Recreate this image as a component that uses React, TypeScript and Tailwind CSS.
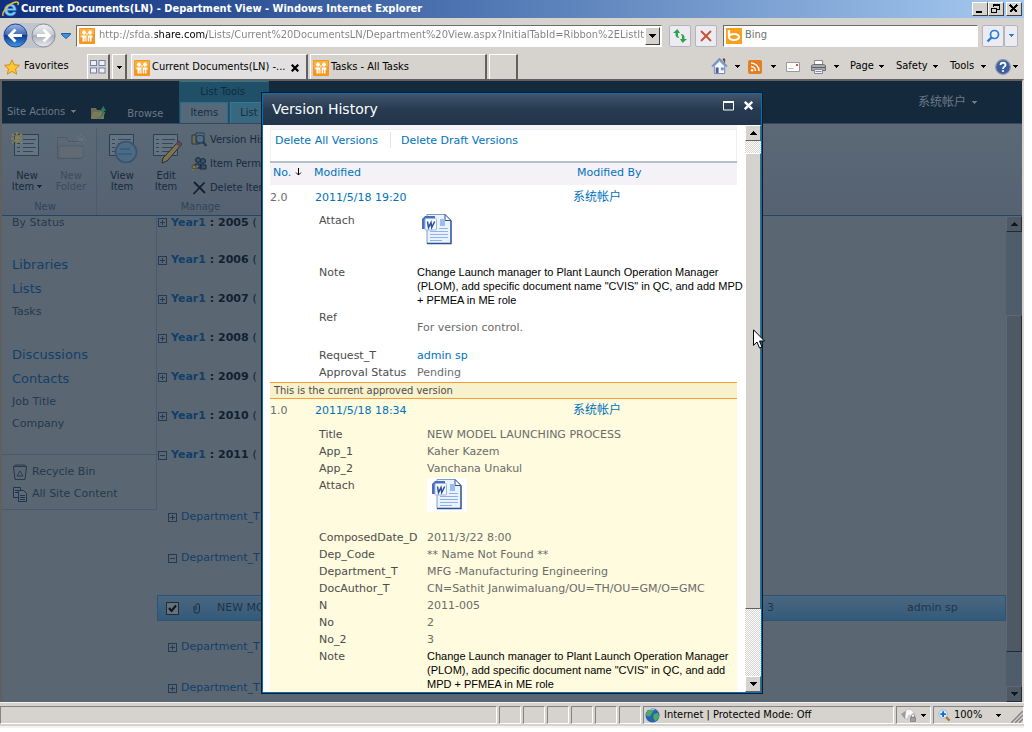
import type { ReactNode } from 'react'

const verdana = "font-['DejaVu_Sans','Noto_Sans_CJK_SC',sans-serif]"
const tahoma = "font-['DejaVu_Sans_Condensed','DejaVu_Sans','Noto_Sans_CJK_SC',sans-serif]"

function Caret({ className = '' }: { className?: string }) {
  return (
    <svg viewBox="0 0 5 3" className={`h-[3px] w-[5px] shrink-0 ${className}`} shapeRendering="crispEdges" fill="currentColor" aria-hidden="true">
      <path d="M0 0h5v1h-5zM1 1h3v1h-3zM2 2h1v1h-1z" />
    </svg>
  )
}

function IeLogo() {
  return (
    <svg viewBox="0 0 18 16" className="h-4 w-[18px] shrink-0" aria-hidden="true">
      <path d="M14.2 9.6H5.6c.2 1.700 1.500 2.600 3 2.600 1.200 0 2-.5 2.500-1.300h3c-.8 2.500-2.900 3.900-5.600 3.900-3.600 0-6.100-2.400-6.100-5.900s2.600-6 6-6c3.600 0 6 2.700 5.800 6.700zM5.700 7.500h5.300C10.800 6 9.800 5.200 8.400 5.200S6 6 5.700 7.500z" fill="#7cc8f8" stroke="#2a78d8" strokeWidth=".6" />
      <path d="M1.200 14.800C-.6 12 6 2.400 14 1c2.200-.3 3 .8 1.800 3" fill="none" stroke="#f8b830" strokeWidth="1.500" />
    </svg>
  )
}

function SiteIcon() {
  return (
    <svg viewBox="0 0 16 16" className="h-4 w-4 shrink-0" aria-hidden="true">
      <rect width="16" height="16" rx="1" fill="#f8951d" />
      <path d="M1 1h14v5c-5 3-9 1-14 4z" fill="#fbb040" />
      <g fill="#fff">
        <path d="M4 2.500h2v1h1v2H6v1H4v-1H3v-2h1zM10 2.500h2v1h1v2h-1v1h-2v-1H9v-2h1z" />
        <path d="M2.500 7.500h5v6H6.300v-4h-.7v4H3.500v-4h-1zM8.700 7.500h4.800v2h-1v4h-1.500v-4h-.7v4H8.700z" />
        <path d="M7.500 5h1v2h-1z" />
      </g>
    </svg>
  )
}

function WordIcon() {
  return (
    <svg viewBox="0 0 32 32" className="h-8 w-8 shrink-0" aria-hidden="true">
      <path d="M6 1.500h18l6 6v23H6z" fill="#eaf2fd" stroke="#7f9ccc" />
      <path d="M30 8v22.500H6" fill="none" stroke="#2b4f8f" strokeWidth="1.300" />
      <path d="M24 1.500v6h6z" fill="#fff" stroke="#2b4f8f" />
      <rect x="19" y="6" width="5" height="7" fill="#9bbcf0" />
      <path d="M18 15.500h9M9 18.500h18M9 21.500h18M9 24.500h18M9 27.500h12" stroke="#8fb0e8" strokeWidth="1" />
      <path d="M1 6l3-3h10v3L4 7v9H1z" fill="#4a6fb8" />
      <rect x="4" y="5.500" width="11.500" height="11.500" rx="1" fill="#f4f8ff" stroke="#9db6e2" />
      <path d="M6.500 8.500l1 6 2.500-5 .7 5 3-6" fill="none" stroke="#2d4f98" strokeWidth="1.500" />
    </svg>
  )
}

function NavArrow({ back = false }: { back?: boolean }) {
  return (
    <button type="button" aria-label={back ? 'Back' : 'Forward'} className="h-[25px] w-[25px] shrink-0">
      <svg viewBox="0 0 25 25" className="h-[25px] w-[25px]">
        <defs>
          <linearGradient id={back ? 'bk' : 'fw'} x1="0" y1="0" x2="0" y2="1">
            <stop offset="0" stopColor={back ? '#9fb7e4' : '#f0f1f4'} />
            <stop offset=".48" stopColor={back ? '#3c68b4' : '#c4c8d0'} />
            <stop offset=".5" stopColor={back ? '#0b3a94' : '#a8adb8'} />
            <stop offset="1" stopColor={back ? '#3f9be8' : '#eceef2'} />
          </linearGradient>
        </defs>
        <circle cx="12.500" cy="12.500" r="11.500" fill={back ? 'url(#bk)' : 'url(#fw)'} stroke={back ? '#27478a' : '#8a909c'} />
        <path d={back ? 'M12.500 6.500l-6 6 6 6M7 12.500h12' : 'M12.500 6.500l6 6-6 6M18 12.500H6'} fill="none" stroke="#fff" strokeWidth="2.800" />
      </svg>
    </button>
  )
}

function CaptionButton({ label, children }: { label: string; children: ReactNode }) {
  return (
    <button type="button" aria-label={label} className="h-[14px] w-4 border border-t-white border-r-[#404040] border-b-[#404040] border-l-white bg-[#d6d3ce]">
      <svg viewBox="0 0 14 12" className="h-3 w-[14px]" fill="none" stroke="#000" shapeRendering="crispEdges">
        {children}
      </svg>
    </button>
  )
}

function TitleBar() {
  return (
    <header className="flex h-[18px] shrink-0 items-center gap-[1px] bg-gradient-to-r from-[#0f2f7c] to-[#a6caf0] px-[2px]">
      <IeLogo />
      <h1 className={`flex-1 truncate pt-[1px] text-[11px] font-bold text-white ${tahoma}`}>
        Current Documents(LN) - Department View - Windows Internet Explorer
      </h1>
      <div className="flex">
        <CaptionButton label="Minimize"><path d="M3 9h6" strokeWidth="2" /></CaptionButton>
        <CaptionButton label="Restore"><path d="M4.500 4V1.500h6v5H8M4 2h7M2.500 5.500h5v4h-5zM2 5h6" /></CaptionButton>
        <span className="w-[2px]" />
        <CaptionButton label="Close"><path d="M3 2l7 7M10 2l-7 7" strokeWidth="1.800" /></CaptionButton>
      </div>
    </header>
  )
}

const toolButton = 'flex h-[22px] items-center justify-center rounded-[2px] border border-[#b4b4c0] bg-[#ecebf2]'

function AddressRow() {
  return (
    <div className="flex h-[34px] shrink-0 items-center px-[3px] pt-[1px] pr-[6px]">
      <div className="flex gap-[3px] rounded-full bg-[#bfc4ce]"><NavArrow back /><NavArrow /></div>
      <button type="button" aria-label="Recent pages" className="ml-[5px] w-3">
        <svg viewBox="0 0 10 6" className="h-[6px] w-[10px]"><path d="M.5.500h9v1L5 5.500.500 1.500z" fill="#3f93dc" stroke="#1d5da8" /></svg>
      </button>
      <div className="ml-[3px] flex h-[22px] min-w-0 flex-1 items-center border border-t-[#6a6a6a] border-r-white border-b-white border-l-[#6a6a6a] bg-white pr-[1px] pl-[2px]">
        <SiteIcon />
        <input
          aria-label="Address"
          defaultValue="http://sfda.share.com/Lists/Current%20DocumentsLN/Department%20View.aspx?InitialTabId=Ribbon%2EListIte"
          className={`ml-1 min-w-0 flex-1 bg-[linear-gradient(90deg,#808080_56px,#000_56px,#000_108px,#808080_108px)] bg-clip-text text-[11px] text-transparent outline-none ${tahoma}`}
        />
        <button type="button" aria-label="Show address history" className="flex h-[18px] w-[15px] items-center justify-center border border-t-white border-r-[#404040] border-b-[#404040] border-l-white bg-[#d6d3ce]">
          <svg viewBox="0 0 7 4" className="h-1 w-[7px]" shapeRendering="crispEdges"><path d="M0 0h7v1H0zM1 1h5v1H1zM2 2h3v1H2zM3 3h1v1H3z" /></svg>
        </button>
      </div>
      <button type="button" aria-label="Refresh" className={`ml-[7px] w-[22px] ${toolButton}`}>
        <svg viewBox="0 0 16 16" className="h-4 w-4" fill="#2fa34a"><path d="M5.500 1L1 5h2.500v1.500C3.500 9 5 10 7.500 10 6.300 9 6 8 6 7V5h2zM10.500 15l4.500-4h-2.500V9.500C12.500 7 11 6 8.500 6 9.700 7 10 8 10 9v2H8z" /></svg>
      </button>
      <button type="button" aria-label="Stop" className={`ml-1 w-[22px] ${toolButton}`}>
        <svg viewBox="0 0 12 12" className="h-3 w-3" stroke="#c4512d" strokeWidth="1.800"><path d="M1 1l10 10M11 1L1 11" /></svg>
      </button>
      <div className="ml-[6px] flex h-[22px] w-[255px] items-center border border-t-[#6a6a6a] border-r-white border-b-white border-l-[#6a6a6a] bg-white pl-[2px]">
        <svg viewBox="0 0 16 16" className="h-4 w-4 shrink-0" aria-hidden="true">
          <rect width="16" height="16" fill="#f8a01c" />
          <path d="M3 2v6" stroke="#fff" strokeWidth="2.400" />
          <ellipse cx="8" cy="9" rx="5" ry="3" fill="none" stroke="#fff" strokeWidth="2.200" />
        </svg>
        <input aria-label="Search" placeholder="Bing" className={`ml-[3px] min-w-0 flex-1 text-[11px] outline-none placeholder:text-[#707070] ${tahoma}`} />
      </div>
      <div className="ml-1 flex">
        <button type="button" aria-label="Go" className={`w-[22px] ${toolButton}`}>
          <svg viewBox="0 0 14 14" className="h-[14px] w-[14px]" fill="#e8f2ff" stroke="#2b7bd8"><circle cx="8.500" cy="5.500" r="4" strokeWidth="1.700" /><path d="M5.500 8.500L1.500 12.500" strokeWidth="2.400" /></svg>
        </button>
        <button type="button" aria-label="Search options" className={`w-[14px] text-[#2b7bd8] ${toolButton}`}><Caret /></button>
      </div>
    </div>
  )
}

function TabRow() {
  const raised = 'border-t border-r-2 border-l border-t-white border-r-[#606060] border-l-white'
  return (
    <div className={`flex h-[27px] shrink-0 items-stretch text-[11px] text-black ${tahoma}`}>
      <button type="button" className="flex w-[87px] items-center gap-1 pt-[2px] pl-1">
        <svg viewBox="0 0 16 16" className="h-4 w-4" aria-hidden="true"><path d="M8 .8l2.200 5 5.300.5-4 3.600 1.200 5.300L8 12.400l-4.700 2.800 1.200-5.300-4-3.600 5.300-.5z" fill="#fdc73a" stroke="#d98a18" /></svg>
        Favorites
      </button>
      <div className="flex gap-[2px] pt-[2px]">
        <button type="button" aria-label="Quick tabs" className={`flex w-[23px] items-center justify-center ${raised}`}>
          <svg viewBox="0 0 16 14" className="h-[14px] w-4" fill="#eef0f8" stroke="#7080a0"><rect x=".5" y=".5" width="6" height="5" /><rect x="9" y=".5" width="6" height="5" /><rect x=".5" y="8" width="6" height="5" /><rect x="9" y="8" width="6" height="5" /></svg>
        </button>
        <button type="button" aria-label="Tab list" className={`flex w-[15px] items-center justify-center ${raised}`}><Caret /></button>
      </div>
      <div className="ml-1 flex gap-[2px] pt-[2px]">
        <div className={`flex w-[177px] items-center bg-[#e2e0e0] px-[2px] pt-[1px] ${raised}`}>
          <SiteIcon />
          <a href="#current" className="ml-[2px] flex-1 whitespace-nowrap">Current Documents(LN) -...</a>
          <button type="button" aria-label="Close tab" className="mr-[5px]"><svg viewBox="0 0 8 8" className="h-2 w-2" stroke="#000" strokeWidth="2.200"><path d="M.7.700l6.600 6.600M7.300.700L.700 7.300" /></svg></button>
        </div>
        <div className={`flex w-[177px] items-center px-[2px] pt-[1px] ${raised}`}>
          <SiteIcon />
          <a href="#tasks" className="ml-[2px]">Tasks - All Tasks</a>
        </div>
        <button type="button" aria-label="New tab" className={`w-[29px] ${raised}`} />
      </div>
      <nav aria-label="Commands" className="ml-auto flex items-center pt-[2px] pr-[6px]">
        <button type="button" aria-label="Home" className="flex w-[37px] items-center gap-[7px]">
          <svg viewBox="0 0 18 18" className="h-[17px] w-[17px]"><path d="M3.500 8.500v8h11v-8L9 3z" fill="#f4f7ff" stroke="#6d84ad" /><path d="M1 9l8-8 8 8" fill="none" stroke="#6f8fc6" strokeWidth="1.800" /><path d="M12.500 1h2v4" stroke="#a33" /><path d="M5 10h3v6H5z" fill="#46619a" /><path d="M10.500 10h3v3h-3z" fill="#5b9be0" /></svg>
          <Caret />
        </button>
        <button type="button" aria-label="Feeds" className="flex w-[38px] items-center gap-[9px]">
          <svg viewBox="0 0 14 14" className="h-[14px] w-[14px]"><rect width="14" height="14" rx="2" fill="#e57d22" /><g fill="none" stroke="#fff" strokeWidth="1.500"><path d="M3 3a8 8 0 0 1 8 8M3 6.500A4.500 4.500 0 0 1 7.500 11" /></g><circle cx="4" cy="10.200" r="1.200" fill="#fff" /></svg>
          <Caret />
        </button>
        <button type="button" aria-label="Read mail" className="w-6">
          <svg viewBox="0 0 14 10" className="h-[10px] w-[14px]"><path d="M.5.500h13v9H.5z" fill="#fbfbfb" stroke="#9a9a9a" /><path d="M2.500 6.500h5" stroke="#b8b8b8" /><path d="M10 2h2v2h-2z" fill="#c85a4a" /></svg>
        </button>
        <button type="button" aria-label="Print" className="flex w-10 items-center gap-[7px]">
          <svg viewBox="0 0 17 16" className="h-4 w-[17px]"><path d="M4.500 1.500h8V6h-8z" fill="#fff" stroke="#888" /><path d="M1.500 6.500l2-1h10l2 1v5h-14z" fill="#a8aaae" stroke="#6a6d73" /><path d="M2 8.500h13" stroke="#5a5d63" /><path d="M4.500 10.500h8v4h-8z" fill="#f4f6fb" stroke="#888" /><path d="M5.500 12.500h6" stroke="#6b8ec8" /></svg>
          <Caret />
        </button>
        <button type="button" className="flex w-[46px] items-center justify-between pr-3">Page<Caret /></button>
        <button type="button" className="flex w-[54px] items-center justify-between pr-3">Safety<Caret /></button>
        <button type="button" className="flex w-[45px] items-center justify-between pr-[9px]">Tools<Caret /></button>
        <button type="button" aria-label="Help" className="flex items-center gap-[2px]">
          <svg viewBox="0 0 16 16" className="h-4 w-4"><circle cx="8" cy="8" r="7.300" fill="#3b5e9f" stroke="#8793ab" strokeWidth="1.200" /><path d="M5.500 6C5.500 3 10.500 3 10.500 6c0 1.600-2.500 1.800-2.500 4" fill="none" stroke="#fff" strokeWidth="1.800" /><circle cx="8" cy="12" r="1.100" fill="#fff" /></svg>
          <Caret />
        </button>
      </nav>
    </div>
  )
}

function SiteHeader() {
  return (
    <div className={`flex h-[43px] shrink-0 items-end border-b border-[#35475a] bg-[#14293c] text-[11px] text-[#6c7a88] ${tahoma}`}>
      <button type="button" className="mb-[3px] ml-[5px] flex items-center gap-[6px]">Site Actions<Caret /></button>
      <button type="button" aria-label="Navigate up" className="mb-[3px] ml-[14px]">
        <svg viewBox="0 0 16 15" className="h-[15px] w-4"><path d="M1 3h5l1 2h7v9H1z" fill="#6b6c55" /><path d="M3 7h12l-2 7H1z" fill="#7d7a5a" /><path d="M6 13c5 0 6-3 6-7h-2l3.500-5L16 6h-2c0 5-3 8-8 7z" fill="#2c7a53" /></svg>
      </button>
      <a href="#browse" className="mb-[1px] ml-[21px]">Browse</a>
      <div className="ml-[16px] flex h-[42px] w-[90px] flex-col border-x border-[#1f5064] bg-[#205068]">
        <span className="flex h-[21px] shrink-0 items-center border-t border-[#2a7890] pl-5 text-[#0e2a40]">List Tools</span>
        <div className="flex flex-1 gap-[2px] text-[#182c3f]">
          <a href="#items" className="flex w-[48px] items-center justify-center border border-b-0 border-[#2b6d88] bg-[#56697b]">Items</a>
          <a href="#list" className="flex flex-1 items-center border border-b-0 border-[#2b7d98] bg-[#386780] pl-[9px]">List</a>
        </div>
      </div>
      <button type="button" className="mr-[45px] mb-[11px] ml-auto flex items-center gap-[6px] text-xs leading-5">系统帐户<Caret /></button>
    </div>
  )
}

function PageGlyph({ kind }: { kind: 'new' | 'folder' | 'view' | 'edit' }) {
  return (
    <svg viewBox="0 0 32 32" className="h-8 w-8" aria-hidden="true">
      {kind === 'folder' ? (
        <g fill="#5d6874" stroke="#4b5b6b"><path d="M2.500 26.500V5.500h9l2 4h13v17z" /><path d="M4 26V14h24v12z" fill="#626b74" strokeDasharray="2 1" /><path d="M22 4l8 8M30 4l-8 8M26 2v11M21 8h10" stroke="#6a747e" strokeDasharray="2 1" /></g>
      ) : (
        <g>
          <path d="M3.500 2.500h24v21h-24z" fill="#65727f" stroke="#2c4054" />
          <path d="M6 7.500h3M12 7.500h13M6 11.500h3M12 11.500h11M6 15.500h3M12 15.500h13M6 19.500h3M12 19.500h10" stroke="#32465a" />
        </g>
      )}
      {kind === 'new' && <path d="M1 2l10 9M11 2L1 11M6 0v13M0 6.500h12" stroke="#878250" strokeWidth="1.800" strokeDasharray="3 1" />}
      {kind === 'view' && <g><circle cx="20" cy="20" r="10.500" fill="#4c6985" stroke="#3a536b" strokeWidth="1.600" /><path d="M14 17h10M12 22h14" stroke="#3c5c7b" strokeWidth="2" /></g>}
      {kind === 'edit' && <g><path d="M29 9l3 3-15 17-5 2 1-5z" fill="#82734c" stroke="#252f38" /><path d="M29 9l3 3-3 3-3-3z" fill="#69464a" /></g>}
    </svg>
  )
}

function BigButton({ kind, lines, width, caret = false, dim = false }: { kind: 'new' | 'folder' | 'view' | 'edit'; lines: [string, string]; width: string; caret?: boolean; dim?: boolean }) {
  return (
    <button type="button" className={`flex flex-col items-center leading-[11px] ${width} ${dim ? 'text-[#3d4b5a]' : 'text-[#172a3d]'}`}>
      <PageGlyph kind={kind} />
      <span className="mt-[6px]">{lines[0]}</span>
      <span className="flex items-center gap-[3px]">{lines[1]}{caret && <Caret />}</span>
    </button>
  )
}

function SmallButton({ icon, children }: { icon: ReactNode; children: ReactNode }) {
  return (
    <button type="button" className="flex h-6 items-center gap-[3px] whitespace-nowrap">
      <svg viewBox="0 0 16 16" className="h-4 w-4 shrink-0" aria-hidden="true">{icon}</svg>
      {children}
    </button>
  )
}

function Ribbon() {
  return (
    <div className={`flex h-[92px] shrink-0 border-b border-[#1c4a64] bg-gradient-to-b from-[#5b6976] to-[#566272] text-[11px] text-[#172a3d] ${tahoma}`}>
      <section className="mt-1 flex w-[95px] flex-col border-r border-[#4c5b6a]">
        <div className="flex flex-1 items-start pt-1 pl-[2px]">
          <BigButton kind="new" lines={['New', 'Item']} width="w-[46px]" caret />
          <BigButton kind="folder" lines={['New', 'Folder']} width="w-[42px]" dim />
        </div>
        <h2 className="pr-2 pb-[1px] text-center leading-[14px] text-[#334454]">New</h2>
      </section>
      <section className="mt-1 flex w-[208px] flex-col border-r border-[#4c5b6a]">
        <div className="flex flex-1 items-start pt-1 pl-[2px]">
          <BigButton kind="view" lines={['View', 'Item']} width="w-[46px]" />
          <BigButton kind="edit" lines={['Edit', 'Item']} width="w-[42px]" />
          <div className="-mt-1 ml-1 flex flex-col">
            <SmallButton icon={<g fill="#66747f" stroke="#26394c"><path d="M1 3h7v9H1z" fill="#716c50" /><path d="M5 1h8v10H5z" /><circle cx="9" cy="7" r="4" fill="#4d6c88" /><path d="M12 10l3.500 4" strokeWidth="2.200" /></g>}>Version History</SmallButton>
            <SmallButton icon={<g fill="#38516b" stroke="#182b3f"><circle cx="7" cy="4" r="2.500" /><circle cx="12" cy="5" r="2.500" /><path d="M4 12V8h6v4zM9 13V9h6v4z" /><path d="M1 14l6-4" stroke="#827a4f" strokeWidth="2" /><circle cx="3" cy="11" r="2" fill="#827a4f" stroke="#4a4636" /></g>}>Item Permissions</SmallButton>
            <SmallButton icon={<path d="M3 2l11 11M13.500 2.500L2.500 14" stroke="#15202c" strokeWidth="1.800" />}>Delete Item</SmallButton>
          </div>
        </div>
        <h2 className="pb-[1px] text-center leading-[14px] text-[#334454]">Manage</h2>
      </section>
    </div>
  )
}

function Toggle({ open = false }: { open?: boolean }) {
  return (
    <svg viewBox="0 0 9 9" className="h-[9px] w-[9px] shrink-0" fill="none" stroke="#233a52" shapeRendering="crispEdges" aria-hidden="true">
      <path d="M.5.500h8v8h-8zM2 4.500h5" />
      {!open && <path d="M4.500 2v5" />}
    </svg>
  )
}

function SideNav() {
  const head = 'flex h-6 items-center text-[13px] text-[#123f68]'
  const item = 'flex h-[22px] items-center'
  return (
    <nav aria-label="Site" className="h-[294px] w-[155px] shrink-0 border-r border-b border-[#4b5a6b]">
      <div className="flex flex-col px-[10px] text-[#26384b]">
        <a href="#status" className="leading-[13px]">By Status</a>
        <a href="#libraries" className={`mt-6 ${head}`}>Libraries</a>
        <a href="#lists" className={head}>Lists</a>
        <a href="#t" className={item}>Tasks</a>
        <a href="#discussions" className={`mt-5 ${head}`}>Discussions</a>
        <a href="#contacts" className={head}>Contacts</a>
        <a href="#job" className={item}>Job Title</a>
        <a href="#company" className={item}>Company</a>
      </div>
      <div className="mt-[19px] flex flex-col border-t border-[#4b5a6b] px-[10px] pt-[6px] text-[#26384b]">
        <a href="#recycle" className={`gap-1 ${item}`}>
          <svg viewBox="0 0 16 16" className="h-4 w-4" fill="none" stroke="#28394b" aria-hidden="true"><path d="M1.500 2.500h13l-1.500 13H3zM1.500 2.500l2-1.500h9l2 1.500M5 12l3-5 3 5z" /></svg>
          Recycle Bin
        </a>
        <a href="#all" className={`gap-1 ${item}`}>
          <svg viewBox="0 0 16 16" className="h-4 w-4" fill="#5d6a77" stroke="#223548" aria-hidden="true"><path d="M1.500 1.500h7v10h-7zM3 4.500h4M3 6.500h4" /><path d="M6.500 4.500h5l3 3v8h-8zM8 9.500h5M8 11.500h5M8 13.500h5" /></svg>
          All Site Content
        </a>
      </div>
    </nav>
  )
}

function YearRow({ year, height, open = false }: { year: string; height: string; open?: boolean }) {
  return (
    <div className={`flex items-center gap-1 pl-[1px] font-bold text-[#12202e] ${height}`}>
      <Toggle open={open} />
      <p><a href="#year" className="text-[#123f68]">Year1</a> : {year} <span className="font-normal">(</span></p>
    </div>
  )
}

function DepartmentRow({ open = false, className = '' }: { open?: boolean; className?: string }) {
  return (
    <div className={`flex h-[41px] items-center gap-1 pl-[11px] ${className}`}>
      <Toggle open={open} />
      <a href="#department" className="text-[#123f68]">Department_T</a>
    </div>
  )
}

function DocumentList() {
  return (
    <main className="min-w-0 flex-1">
      <YearRow year="2005" height="leading-[13px] mb-3" />
      {['2006', '2007', '2008', '2009', '2010'].map((y) => <YearRow key={y} year={y} height="h-[39px]" />)}
      <YearRow year="2011" height="h-[39px]" open />
      <DepartmentRow className="mt-[22px]" />
      <DepartmentRow open />
      <div className="mt-4 mb-[6px] flex h-[26px] items-center border border-[#2b5574] bg-gradient-to-b from-[#4a6780] to-[#335a79] pl-2 text-[#1f3448]">
        <label className="relative flex h-[13px] w-[13px]">
          <input type="checkbox" defaultChecked aria-label="Select item" className="peer h-[13px] w-[13px] appearance-none border border-[#1f2c38] bg-[#66717b]" />
          <svg viewBox="0 0 13 13" className="pointer-events-none absolute inset-0 hidden h-[13px] w-[13px] peer-checked:block" fill="none" stroke="#0c141c" strokeWidth="2"><path d="M3 6l2.500 3L10 3.500" /></svg>
        </label>
        <svg viewBox="0 0 8 11" className="ml-[14px] h-[11px] w-2" fill="none" stroke="#1a2b3b" aria-hidden="true"><path d="M1 3v4.500a2.500 2.500 0 0 0 5.500 0V2.500a1.700 1.700 0 0 0-3.500 0V7" /></svg>
        <span className="ml-4 flex-1 truncate">NEW MODEL</span>
        <span className="w-[140px]">3</span>
        <span className="w-[98px]">admin sp</span>
      </div>
      <DepartmentRow />
      <DepartmentRow />
    </main>
  )
}

function ScrollButton({ down = false, dim = false }: { down?: boolean; dim?: boolean }) {
  const tone = dim ? 'border-t-[#5f6975] border-l-[#5f6975] border-r-[#1d2a37] border-b-[#1d2a37] bg-[#4f5963]' : 'border-t-white border-l-white border-r-[#606060] border-b-[#606060] bg-[#d6d3ce]'
  return (
    <button type="button" aria-label={down ? 'Scroll down' : 'Scroll up'} className={`flex h-4 w-full shrink-0 items-center justify-center border ${tone}`}>
      <svg viewBox="0 0 7 4" className={`h-1 w-[7px] ${down ? '' : 'rotate-180'}`} shapeRendering="crispEdges"><path d="M0 0h7v1H0zM1 1h5v1H1zM2 2h3v1H2zM3 3h1v1H3z" fill={dim ? '#0e1821' : '#000'} /></svg>
    </button>
  )
}

function DocumentScroll() {
  return (
    <div className="flex w-4 shrink-0 flex-col bg-[#4f5c69]">
      <ScrollButton dim />
      <div className="flex min-h-0 flex-1 flex-col pt-[83px] pb-[34px]">
        <div className="flex-1 border border-t-[#5f6975] border-r-[#1d2a37] border-b-[#1d2a37] border-l-[#5f6975] bg-[#4f5963]" />
      </div>
      <ScrollButton down dim />
    </div>
  )
}

type Field = { label: string; value: ReactNode; height?: string }

function Fields({ rows, labelWidth }: { rows: Field[]; labelWidth: string }) {
  return (
    <table className="ml-[49px] border-collapse">
      <tbody>
        {rows.map((r) => (
          <tr key={r.label} className={`align-top ${r.height ?? 'h-[17px]'}`}>
            <th scope="row" className={`p-0 text-left font-normal whitespace-nowrap text-[#4c4c4c] ${labelWidth}`}>{r.label}</th>
            <td className="p-0 whitespace-nowrap">{r.value}</td>
          </tr>
        ))}
      </tbody>
    </table>
  )
}

function NoteText({ lines }: { lines: string[] }) {
  return (
    <div className="pt-[1px] font-['Liberation_Sans',sans-serif] text-[11px] leading-[14px] text-black">
      {lines.map((l) => <p key={l}>{l}</p>)}
    </div>
  )
}

const pending: Field[] = [
  { label: 'Attach', height: 'h-[52px]', value: <div className="pt-[1px] pl-1"><WordIcon /></div> },
  { label: 'Note', height: 'h-[45px]', value: <NoteText lines={['Change Launch manager to Plant Launch Operation Manager', '(PLOM), add specific document name "CVIS" in QC, and add MPD', '+ PFMEA in ME role']} /> },
  { label: 'Ref', height: 'h-[38px]', value: <p className="pt-[10px]">For version control.</p> },
  { label: 'Request_T', value: <a href="#admin" className="text-[#0072bc]">admin sp</a> },
  { label: 'Approval Status', value: 'Pending' },
]

const approved: Field[] = [
  { label: 'Title', value: 'NEW MODEL LAUNCHING PROCESS' },
  { label: 'App_1', value: 'Kaher Kazem' },
  { label: 'App_2', value: 'Vanchana Unakul' },
  { label: 'Attach', height: 'h-[52px]', value: <div className="mt-[1px] flex h-[34px] w-10 bg-white pl-1"><WordIcon /></div> },
  { label: 'ComposedDate_D', value: '2011/3/22 8:00' },
  { label: 'Dep_Code', value: '** Name Not Found **' },
  { label: 'Department_T', value: 'MFG -Manufacturing Engineering' },
  { label: 'DocAuthor_T', value: 'CN=Sathit Janwimaluang/OU=TH/OU=GM/O=GMC' },
  { label: 'N', value: '2011-005' },
  { label: 'No', value: '2' },
  { label: 'No_2', value: '3' },
  { label: 'Note', height: 'h-[45px]', value: <NoteText lines={['Change Launch manager to Plant Launch Operation Manager', '(PLOM), add specific document name "CVIS" in QC, and add', 'MPD + PFMEA in ME role']} /> },
]

function VersionLine({ no, date }: { no: string; date: string }) {
  return (
    <div className="grid h-[26px] grid-cols-[45px_258px_1fr] items-center pb-1">
      <span>{no}</span>
      <a href="#version" className="text-[#0072bc]">{date}</a>
      <a href="#account" className="text-xs text-[#0072bc]">系统帐户</a>
    </div>
  )
}

function VersionDialog() {
  return (
    <section role="dialog" aria-label="Version History" className={`flex w-[502px] flex-col border border-[#0b1a28] bg-white text-[11px] leading-[17px] text-[#6b6b6b] ${verdana}`}>
      <div className="flex min-h-0 flex-1 flex-col border border-[#0072bc]">
        <header className="flex h-[31px] shrink-0 items-center bg-gradient-to-b from-[#41566c] via-[#263a50] to-[#21344b] pr-2 pl-[9px] text-white">
          <h2 className="flex-1 pb-[2px] text-sm">Version History</h2>
          <button type="button" aria-label="Maximize" className="mb-2 mr-[10px]"><svg viewBox="0 0 11 11" className="h-[11px] w-[11px]" fill="none" stroke="#fff"><path d="M.5 1.500h10v8.500H.5z" /><path d="M0 2h11" strokeWidth="2" /></svg></button>
          <button type="button" aria-label="Close" className="mb-2"><svg viewBox="0 0 9 9" className="h-[9px] w-[9px]" stroke="#fff" strokeWidth="2.400"><path d="M.8.800l7.400 7.400M8.200.800L.8 8.200" /></svg></button>
        </header>
        <div className="flex min-h-0 flex-1">
          <div className="min-w-0 flex-1 overflow-hidden pr-2 pl-[7px]">
            <div className="h-1 bg-[#f5f3f7]" />
            <div className="flex h-8 border border-b-0 border-[#f0eef2] pt-[2px] pl-1 text-[#0072bc]">
              <a href="#delete-all">Delete All Versions</a>
              <span className="mr-[10px] ml-3 h-4 w-[1px] bg-[#e6e3da]" />
              <a href="#delete-draft">Delete Draft Versions</a>
            </div>
            <div className="grid h-6 grid-cols-[44px_263px_1fr] items-center border-t-2 border-[#b4bfcc] bg-[#f4f2f6] pb-1 text-[#0072bc]">
              <a href="#no" className="flex items-center gap-1 pl-[3px]">
                No.
                <svg viewBox="0 0 7 8" className="h-2 w-[7px]" fill="none" stroke="#000" aria-hidden="true"><path d="M3.500 0v7M1 4.500l2.500 2.500L6 4.500" /></svg>
              </a>
              <a href="#modified">Modified</a>
              <a href="#by">Modified By</a>
            </div>
            <div className="pt-[1px]">
              <VersionLine no="2.0" date="2011/5/18 19:20" />
              <Fields rows={pending} labelWidth="min-w-[98px]" />
            </div>
            <div className="bg-[#fffbde]">
              <div className={`mt-[1px] h-[17px] border-y border-[#ff9a31] bg-[#f7f1cc] pl-1 leading-[15px] text-[#4c4c4c] ${tahoma}`}>This is the current approved version</div>
              <VersionLine no="1.0" date="2011/5/18 18:34" />
              <div className="pt-[1px] pb-4"><Fields rows={approved} labelWidth="min-w-[108px]" /></div>
            </div>
          </div>
          <div className="flex w-4 shrink-0 flex-col bg-[repeating-conic-gradient(#d6d3ce_0_25%,#ffffff_0_50%)] bg-[length:2px_2px]">
            <ScrollButton />
            <div className="flex min-h-0 flex-1 flex-col pt-3 pb-[67px]">
              <div className="flex-1 border border-t-white border-r-[#606060] border-b-[#606060] border-l-white bg-[#d6d3ce]" />
            </div>
            <ScrollButton down />
          </div>
        </div>
      </div>
    </section>
  )
}

function StatusBar() {
  const pane = 'flex items-center border border-t-[#848284] border-r-white border-b-white border-l-[#848284]'
  return (
    <footer className={`flex h-[26px] shrink-0 gap-[2px] border-t border-b-2 border-[#f4f3f1] bg-[#d6d3ce] pt-[3px] pb-[2px] text-[11px] text-black ${tahoma}`}>
      <div className={`flex-1 ${pane}`} />
      {[0, 1, 2, 3, 4, 5].map((n) => <div key={n} className={`w-[22px] ${pane}`} />)}
      <div className={`w-[251px] gap-1 pl-[1px] ${pane}`}>
        <svg viewBox="0 0 16 16" className="h-[15px] w-[15px]" aria-hidden="true"><circle cx="8" cy="8" r="7.500" fill="#2b62b8" /><path d="M2 4c3-3 6-3 7-1L7 6 5 9 1 8zM9 7l5-2 1 5-4 4-2-3z" fill="#4eae57" /><path d="M4 2c2-1 4-1 6 0" stroke="#bfe0ff" fill="none" /></svg>
        Internet | Protected Mode: Off
      </div>
      <button type="button" aria-label="Privacy" className={`w-[35px] justify-between px-1 ${pane}`}>
        <svg viewBox="0 0 16 15" className="h-[15px] w-4"><path d="M1 6l6-5 4 1 4 6-4 1-3-2-2 5z" fill="#f8f8f8" stroke="#c4c4c4" /><path d="M0 6l5-3-1 8z" fill="#9b9b9b" /><path d="M9.500 9.500h5v4h-5z" fill="#a0a0a0" stroke="#888" /><path d="M10.500 9V7.500c0-2 3-2 3 0V9" fill="none" stroke="#888" /></svg>
        <Caret />
      </button>
      <button type="button" className={`w-[91px] pl-1 ${pane}`}>
        <svg viewBox="0 0 14 14" className="h-[13px] w-[13px]" aria-hidden="true"><path d="M8.500 8.500l4 4" stroke="#b07838" strokeWidth="2.400" /><circle cx="5.500" cy="5.500" r="4.500" fill="#e4f1ff" stroke="#9ab6d8" /><path d="M5.500 2.500v6M2.500 5.500h6" stroke="#1768c8" strokeWidth="2" /></svg>
        <span className="ml-[3px] w-[42px] text-left">100%</span>
        <Caret />
        <svg viewBox="0 0 12 12" className="ml-auto h-3 w-3 self-end" stroke="#848284" strokeWidth="1.500" aria-hidden="true"><path d="M0 12L12 0M4 12l8-8M8 12l4-4" /></svg>
      </button>
    </footer>
  )
}

export default function App() {
  return (
    <div className="h-screen bg-white pr-2 pb-1">
      <div className="flex h-full flex-col bg-[#d6d3ce]">
        <TitleBar />
        <AddressRow />
        <TabRow />
        <div className="relative flex min-h-0 flex-1 flex-col overflow-hidden border-t-2 border-r-2 border-l-2 border-t-[#606060] border-r-[#d6d3ce] border-l-[#606060] bg-[#5a6773]">
          <SiteHeader />
          <Ribbon />
          <div className={`flex min-h-0 flex-1 overflow-hidden text-[11px] ${verdana}`}>
            <SideNav />
            <DocumentList />
            <DocumentScroll />
          </div>
          <div className="absolute inset-0 flex justify-center pt-[11px] pb-2">
            <VersionDialog />
          </div>
          <svg viewBox="0 0 12 20" className="absolute top-[248px] left-[751px] h-5 w-3" aria-hidden="true">
            <path d="M.5.800v15.500l3.500-3.300 2.500 6 2.500-1-2.500-6h5z" fill="#fff" stroke="#000" />
          </svg>
        </div>
        <StatusBar />
      </div>
    </div>
  )
}
